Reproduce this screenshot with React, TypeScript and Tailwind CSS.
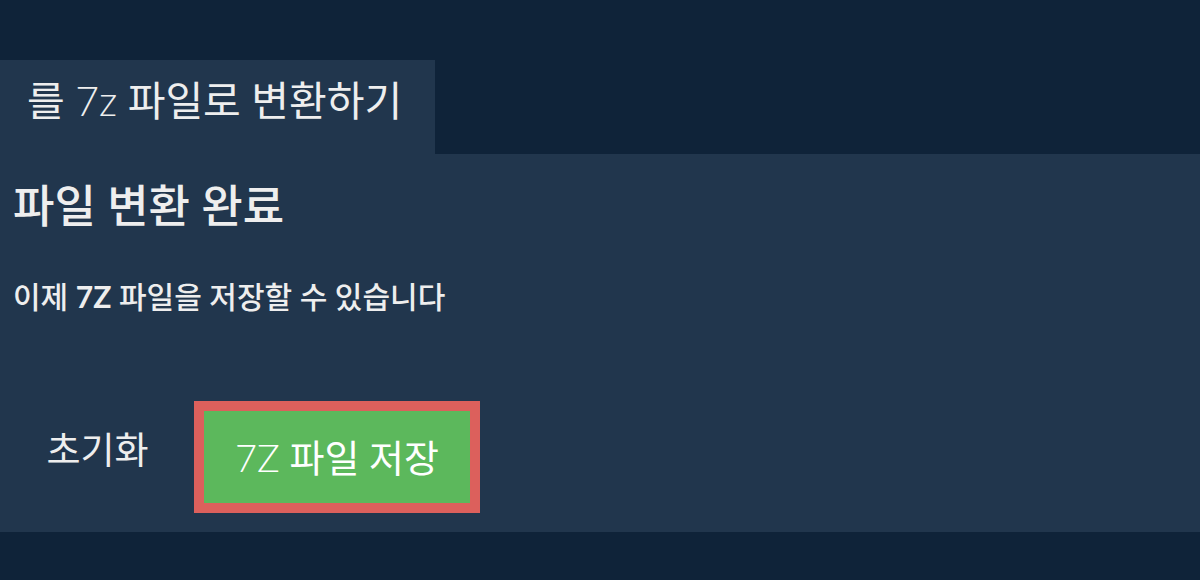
import React from "react";

export default function App() {
  const font = { fontFamily: "Lato, 'Noto Sans CJK KR', sans-serif" };
  return (
    <div className="w-[1200px] h-[580px] bg-[#0f2339] pt-[60px] text-[#eeeeee]" style={font}>
      <div className="w-[435px] h-[94px] bg-[#21364d] flex items-center pl-[27px] pb-[14px]">
        <span className="text-[41px] font-normal leading-none">
          를 <span className="font-light">7z</span> 파일로 변환하기
        </span>
      </div>
      <div className="h-[378px] bg-[#21364d] px-[13px] pt-[24px]">
        <h2 className="text-[45px] font-medium leading-[56px]">파일 변환 완료</h2>
        <p className="mt-[42px] text-[30px] font-medium leading-[40px]">
          이제 <span className="font-bold">7Z</span> 파일을 저장할 수 있습니다
        </p>
        <div className="mt-[85px] flex items-center">
          <button className="w-[169px] mb-[16px] text-center text-[37px] font-normal text-[#eeeeee] leading-none">초기화</button>
          <div className="ml-[12px] border-[10px] border-[#dc605c]">
            <button className="w-[266px] h-[92px] bg-[#5cb85c] text-white text-[38px] font-normal flex items-center justify-center leading-none">
              <span>
                <span className="font-light">7Z</span> 파일 저장
              </span>
            </button>
          </div>
        </div>
      </div>
    </div>
  );
}
